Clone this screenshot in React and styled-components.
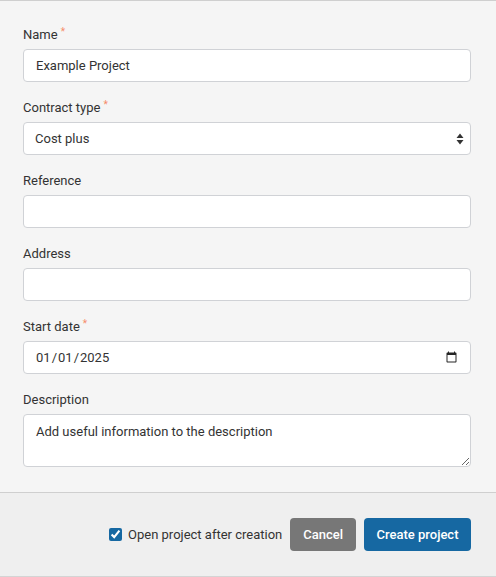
import React from "react";
import styled, { createGlobalStyle } from "styled-components";

const Global = createGlobalStyle`
  html, body { margin: 0; padding: 0; background: #f5f5f5; }
  body { font-family: Roboto, "Liberation Sans", Arial, sans-serif; font-size: 13px; color: #333; }
  * { box-sizing: border-box; }
`;

const Dialog = styled.div`
  width: 496px;
  height: 577px;
  display: flex;
  flex-direction: column;
  border-top: 1px solid #cfcfcf;
  background: #f5f5f5;
`;

const Body = styled.form`
  display: flex;
  flex-direction: column;
  gap: 16px;
  padding: 24px 25px 24px 23px;
`;

const Field = styled.div`
  display: flex;
  flex-direction: column;
  gap: 4px;
`;

const Label = styled.label`
  font-size: 13px;
  line-height: 20px;
  color: #333;
`;

const Req = styled.span`
  color: #f58a68;
  font-size: 10px;
  vertical-align: top;
  position: relative;
  top: -3px;
  margin-left: 3px;
`;

const inputBase = `
  width: 100%;
  height: 33px;
  border: 1px solid #d0d2d6;
  border-radius: 4px;
  background: #fff;
  padding: 0 12px;
  font-family: Roboto, "Liberation Sans", Arial, sans-serif;
  font-size: 13px;
  color: #333;
  outline: none;
`;

const Input = styled.input`
  ${inputBase}
  padding-left: ${(p) => (p.type === "date" ? "11px" : "12px")};
  &::-webkit-calendar-picker-indicator { opacity: 0.85; margin-right: -2px; }
`;

const Select = styled.select`
  ${inputBase}
  padding: 0 24px 0 11px;
  appearance: none;
  -webkit-appearance: none;
  background-image: url("data:image/svg+xml,%3Csvg xmlns='http://www.w3.org/2000/svg' width='8' height='12' viewBox='0 0 8 12'%3E%3Cpath d='M4 0.5L7.5 5H0.5Z M4 11.5L7.5 7H0.5Z' fill='%23333'/%3E%3C/svg%3E");
  background-repeat: no-repeat;
  background-position: right 6px center;
  background-size: 8px 12px;
`;

const TextArea = styled.textarea`
  ${inputBase}
  height: 53px;
  padding: 8px 12px;
  line-height: 18px;
  resize: vertical;
  display: block;
`;

const Footer = styled.div`
  margin-top: auto;
  border-top: 1px solid #cfcfcf;
  border-bottom: 1px solid #d4d4d4;
  background: #efefef;
  display: flex;
  justify-content: flex-end;
  align-items: center;
  gap: 8px;
  padding: 25px 25px 25px 23px;
`;

const Check = styled.label`
  display: flex;
  align-items: center;
  gap: 6px;
  color: #333;
  font-size: 13px;
  cursor: pointer;
  input {
    margin: 0;
    width: 13px;
    height: 13px;
    accent-color: #1668a2;
  }
`;

const Button = styled.button`
  height: 33px;
  border: none;
  border-radius: 4px;
  padding: 0 ${(p) => (p.$primary ? "12.5px" : "13px")};
  font-family: Roboto, "Liberation Sans", Arial, sans-serif;
  font-size: 13px;
  font-weight: 500;
  color: #fff;
  background: ${(p) => (p.$primary ? "#1668a2" : "#777777")};
  cursor: pointer;
`;

export default function App() {
  return (
    <Dialog>
      <Global />
      <Body onSubmit={(e) => e.preventDefault()}>
        <Field>
          <Label>Name<Req>*</Req></Label>
          <Input defaultValue="Example Project" />
        </Field>
        <Field>
          <Label>Contract type<Req>*</Req></Label>
          <Select defaultValue="cost">
            <option value="cost">Cost plus</option>
            <option value="fixed">Fixed price</option>
          </Select>
        </Field>
        <Field>
          <Label>Reference</Label>
          <Input />
        </Field>
        <Field>
          <Label>Address</Label>
          <Input />
        </Field>
        <Field>
          <Label>Start date<Req>*</Req></Label>
          <Input type="date" defaultValue="2025-01-01" />
        </Field>
        <Field>
          <Label>Description</Label>
          <TextArea defaultValue="Add useful information to the description" />
        </Field>
      </Body>
      <Footer>
        <Check>
          <input type="checkbox" defaultChecked />
          Open project after creation
        </Check>
        <Button type="button">Cancel</Button>
        <Button type="button" $primary>Create project</Button>
      </Footer>
    </Dialog>
  );
}
